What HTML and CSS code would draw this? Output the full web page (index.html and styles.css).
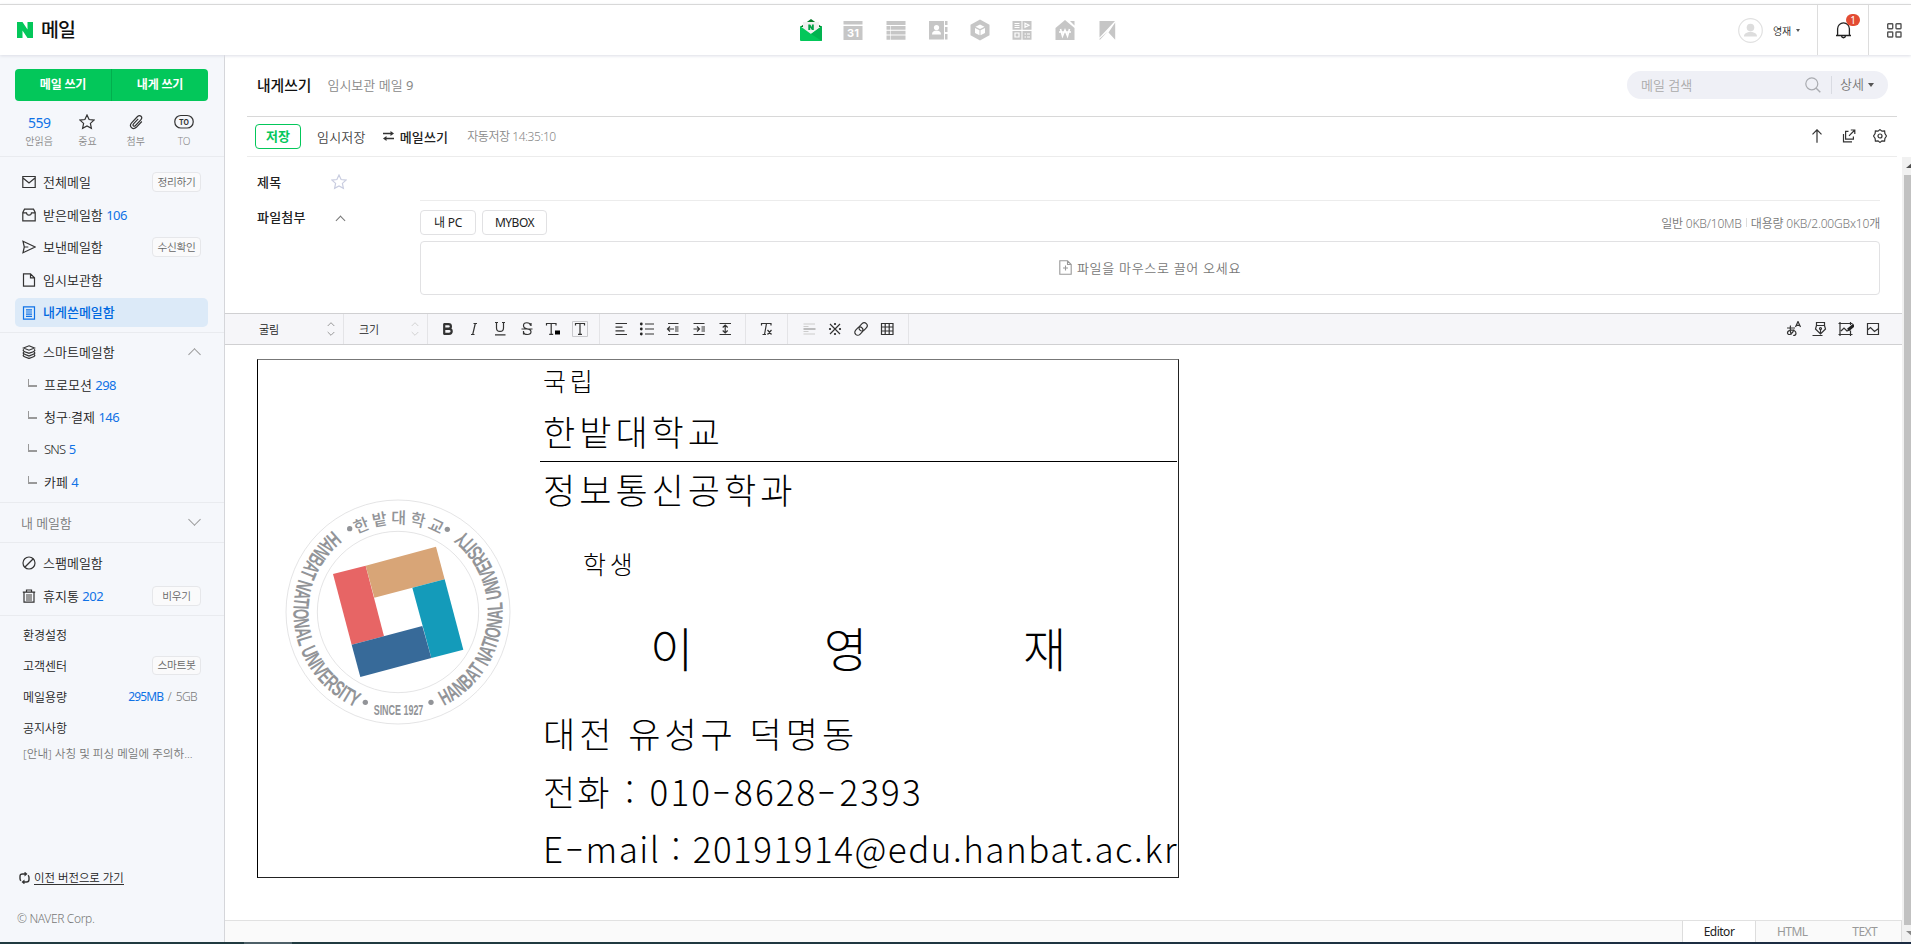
FILE: index.html
```html
<!DOCTYPE html>
<html lang="ko">
<head>
<meta charset="utf-8">
<title>내게쓰기 : 네이버 메일</title>
<link rel="stylesheet" href="styles.css">
</head>
<body>
<div class="app">
<header class="top">
  <div class="brand"><svg width="16" height="16" viewBox="0 0 16 16"><path fill="#03c75a" d="M0 0h5.500l5 7.400V0H16v16h-5.500l-5-7.400V16H0z"/></svg><span>메일</span></div>
  <nav class="apps">
    <svg viewBox="0 0 22 22"><path fill="#047a28" d="M0 8 11 0l11 8z"/><path fill="#f0f0f0" d="M3 3h16v9l-8 5-8-5z"/><path fill="#03c75a" d="M0 7l11 8 11-8v14a1 1 0 0 1-1 1H1a1 1 0 0 1-1-1z"/><path fill="#02b350" d="M22 7v15L11 15z"/><path fill="#02a247" d="M8.300 5.500h1.900l1.700 2.600V5.500h1.900V11h-1.900l-1.700-2.600V11H8.300z"/></svg>
    <svg viewBox="0 0 22 22"><path fill="#c6c6c6" d="M1.500 2h19v3.500h-19zM1.500 7h19v14h-19z"/><text x="11" y="18" text-anchor="middle" class="cal">31</text></svg>
    <svg viewBox="0 0 22 22"><path fill="#c6c6c6" d="M1.500 2h19v4h-19zM1.500 7h3.500v3.700h-3.500zM5.600 7h14.900v3.700H5.600zM1.500 11.700h3.500v3.700h-3.500zM5.600 11.700h14.900v3.700H5.600zM1.500 16.500h3.500v4.300h-3.500zM5.600 16.500h14.900v4.300H5.600z"/></svg>
    <svg viewBox="0 0 22 22"><path fill="#c6c6c6" d="M2 2h15v18.500H2zM18 2h2.500v4H18zM18 8h2.500v5H18zM18 15h2.500v5.500H18z"/><circle cx="9.500" cy="8.500" r="2.600" fill="#fff"/><path fill="#fff" d="M5 15.500c0-3 2-4 4.500-4s4.500 1 4.500 4z"/></svg>
    <svg viewBox="0 0 22 22"><path fill="#c6c6c6" d="M11 .5l9.500 5.300v10.400L11 21.500l-9.500-5.300V5.800z"/><path fill="#fff" d="M11 5.500l4.500 2.200L11 10 6.500 7.700zM6 9l4.500 2.300v5L6 14zM16 9l-4.500 2.300v5L16 14z"/></svg>
    <svg viewBox="0 0 22 22"><path fill="#c6c6c6" d="M1.500 2h9v8.700h-9zM11.500 2h9v8.700h-9zM1.500 12h9v8.700h-9zM11.500 12h9v8.700h-9z"/><path fill="none" stroke="#fff" stroke-width="1.200" d="M3.500 4.500h5M3.500 6.500h5M3.500 8.500h5M14 4.200l4 2-4 2zM4 14h4v4H4zM13.500 15h1.500M16 15h3M13.500 18h1.500M16 18h3"/></svg>
    <svg viewBox="0 0 22 22"><path fill="#c6c6c6" d="M11 1l9.500 8v12h-19V9zM16 2h4.500v4.500z"/><path fill="none" stroke="#fff" stroke-width="1.600" d="M6.500 10l2 7L11 11l2.500 6 2-7M5 13h12"/></svg>
    <svg viewBox="0 0 22 22"><path fill="#c6c6c6" d="M3.500 2h15.500L3.500 18.500zM19.200 3.500v17.300l-6.700-7.300zM11.800 12.500L4 20.800h-.5v-1z"/></svg>
  </nav>
  <div class="account">
    <div class="user"><svg width="25" height="25" viewBox="0 0 25 25"><circle cx="12.500" cy="12.500" r="11.800" fill="#fff" stroke="#e1e1e1" stroke-width="1.200"/><circle cx="12.500" cy="9.600" r="3.800" fill="#ddd"/><path fill="#ddd" d="M6 18.500c0-3 2-3.500 5-4.500h3c3 1 5 1.500 5 4.500z"/></svg><span>영재</span><i class="caret"></i></div>
    <div class="bell"><svg width="17" height="18" viewBox="0 0 17 18"><path fill="none" stroke="#222" stroke-width="1.300" d="M1 14.500h15M2.600 14.500V7.800a5.900 5.900 0 0 1 11.800 0v6.700M6.500 15c.3 2.300 3.700 2.300 4 0"/></svg><b>1</b></div>
    <div class="more"><svg width="15" height="15" viewBox="0 0 15 15"><g fill="none" stroke="#555" stroke-width="1.400"><rect x=".7" y=".7" width="5" height="5" rx=".6"/><rect x="9" y=".7" width="5" height="5" rx=".6"/><rect x=".7" y="9" width="5" height="5" rx=".6"/><rect x="9" y="9" width="5" height="5" rx=".6"/></g></svg></div>
  </div>
</header>
<div class="body">
<aside class="side">
  <div class="write"><span>메일 쓰기</span><span>내게 쓰기</span></div>
  <div class="quick">
    <div><em>559</em><span>안읽음</span></div>
    <div><svg width="16" height="16" viewBox="0 0 16 16"><path class="ln" d="M8 1l2.100 4.500 4.900.6-3.600 3.300 1 4.900L8 11.900l-4.400 2.400 1-4.900L1 6.100l4.900-.6z"/></svg><span>중요</span></div>
    <div><svg width="16" height="16" viewBox="0 0 16 16"><path class="ln" d="M13.800 7.500l-5.500 5.800c-3.500 3.200-7.800-1-4.700-4.500l5.900-6.300c2.600-2.400 5.700.7 3.300 3.300l-5.500 5.900c-1.500 1.300-3-.3-1.800-1.800l4.700-5"/></svg><span>첨부</span></div>
    <div><svg width="20" height="16" viewBox="0 0 20 16"><rect class="ln" x=".8" y="1.500" width="18.400" height="12.500" rx="6"/><text x="10" y="10.500" text-anchor="middle" class="to">TO</text></svg><span>TO</span></div>
  </div>
  <ul class="menu first">
    <li><svg viewBox="0 0 14 14"><path class="ln" d="M.8 1.500h12.400v11H.8zM1 3l6 5 6-5"/></svg><span>전체메일</span><b>정리하기</b></li>
    <li><svg viewBox="0 0 14 14"><path class="ln" d="M.8 4.500L2.500 1.200h9l1.700 3.300v8.300H.8zM.8 4.800h3.700c.3 3.200 4.700 3.200 5 0h3.700"/></svg><span>받은메일함 <em>106</em></span></li>
    <li><svg viewBox="0 0 14 14"><path class="ln" d="M1 1.200L13.200 7 1 12.800 2.300 7zM2.300 7h4"/></svg><span>보낸메일함</span><b>수신확인</b></li>
    <li><svg viewBox="0 0 14 14"><path class="ln" d="M1.500.8h7l4 4v8.400h-11zM8.500.8v4h4"/></svg><span>임시보관함</span></li>
    <li class="on"><svg viewBox="0 0 14 14"><path d="M1.500.8h11v12.400h-11zM4 3.800h6M4 6h6M4 8.200h6M4 10.400h6"/></svg><span>내게쓴메일함</span></li>
  </ul>
  <ul class="menu smart">
    <li><svg viewBox="0 0 14 14"><path class="ln" d="M7 .8l5.500 2.200L7 5.200 1.500 3zM2 4.500C-.5 5.700 3 6.800 7 8.300c4-1.500 7.500-2.600 5-3.800M2 7.200C-.5 8.400 3 9.500 7 11c4-1.500 7.500-2.600 5-3.800M2 9.600C-.5 10.800 3 12 7 13.400c4-1.400 7.500-2.600 5-3.800"/></svg><span>스마트메일함</span><i class="chev up"></i></li>
    <li class="sub"><u></u><span>프로모션 <em>298</em></span></li>
    <li class="sub"><u></u><span>청구·결제 <em>146</em></span></li>
    <li class="sub"><u></u><span><q>SNS</q> <em>5</em></span></li>
    <li class="sub"><u></u><span>카페 <em>4</em></span></li>
  </ul>
  <div class="mine"><span>내 메일함</span><i class="chev"></i></div>
  <ul class="menu trash">
    <li><svg viewBox="0 0 14 14"><circle class="ln" cx="7" cy="7" r="6"/><path class="ln" d="M3 11l8-8"/></svg><span>스팸메일함</span></li>
    <li><svg viewBox="0 0 14 14"><path fill="#999" d="M4 5h6v7H4z"/><path class="ln" d="M.8 3.200h12.400M4.500 3V1h5v2M2 3.200v10h10v-10"/></svg><span>휴지통 <em>202</em></span><b>비우기</b></li>
  </ul>
  <ul class="etc">
    <li>환경설정</li>
    <li>고객센터<b>스마트봇</b></li>
    <li>메일용량<span><em>295MB</em> / 5GB</span></li>
    <li>공지사항</li>
    <li class="note">[안내] 사칭 및 피싱 메일에 주의하...</li>
  </ul>
  <div class="old"><svg width="13" height="12" viewBox="0 0 13 12"><path fill="none" stroke="#333" stroke-width="1.400" d="M7.500 2H4.500Q2 2 2 4.500v2Q2 8 3 8.800M5.500 10h3Q11 10 11 7.500v-2Q11 4 10 3.200"/><path fill="#333" d="M6.500-.5L9.500 2l-3 2.500zM6.500 7.500L3.500 10l3 2.500z"/></svg><span>이전 버전으로 가기</span></div>
  <div class="copy">© NAVER Corp.</div>
</aside>
<main class="main">
  <div class="title"><h1>내게쓰기</h1><span>임시보관 메일 <em>9</em></span>
    <div class="search"><span>메일 검색</span><svg width="16" height="16" viewBox="0 0 16 16"><circle cx="6.800" cy="6.800" r="6" fill="none" stroke="#a9abb0" stroke-width="1.200"/><path stroke="#a9abb0" stroke-width="1.400" d="M11.200 11.200L15.300 15.300"/></svg><label>상세<i class="caret"></i></label></div>
  </div>
  <div class="actions"><button>저장</button><span class="temp">임시저장</span><svg width="11" height="10" viewBox="0 0 11 10"><path fill="none" stroke="#333" stroke-width="1.400" d="M0 2.500h9M2 7.500h9"/><path fill="#333" d="M7.500 0L11 2.500 7.500 5zM3.500 5L0 7.500 3.500 10z"/></svg><strong>메일쓰기</strong><span class="auto">자동저장 14:35:10</span>
    <div class="tools">
      <svg viewBox="0 0 14 14"><path class="ln" d="M7 13.800V.8M2.500 5.300L7 .8l4.500 4.500"/></svg>
      <svg viewBox="0 0 14 14"><path class="ln" d="M6.500 2.300H3.600v7.800h7.800V7.500M8.800 1h4v4M12.800 1L7 6.800M1.500 5v7.800H10"/></svg>
      <svg viewBox="0 0 14 14"><path class="ln" d="M7 .6l2 1.600 2.600-.2.300 2.500L13.500 7l-1.600 2.500-.3 2.500-2.600-.2-2 1.600-2-1.600-2.600.2-.3-2.500L.5 7l1.600-2.500.3-2.500 2.600.2z"/><circle class="ln" cx="7" cy="7" r="2"/></svg>
    </div>
  </div>
  <div class="pane">
    <div class="form">
      <div class="subject"><strong>제목</strong><svg width="16" height="16" viewBox="0 0 16 16"><path fill="none" stroke="#c9cde0" stroke-width="1.200" d="M8 1l2.100 4.500 4.900.6-3.600 3.300 1 4.900L8 11.900l-4.400 2.400 1-4.900L1 6.100l4.900-.6z"/></svg><div class="line"></div></div>
      <div class="attach"><strong>파일첨부</strong><i class="chev up dark"></i>
        <div class="files">
          <div class="frow"><span class="btn pc">내 PC</span><span class="btn box">MYBOX</span><span class="usage"><span>일반 0KB/10MB</span><s></s><span>대용량 0KB/2.00GBx10개</span></span></div>
          <div class="drop"><svg width="13" height="15" viewBox="0 0 13 15"><path fill="none" stroke="#999" stroke-width="1.100" d="M.8.8h7.700l3.700 3.700v9.700H.8zM8.500.8v3.700h3.700M6.500 5.500v5M4 8h5"/></svg><span>파일을 마우스로 끌어 오세요</span></div>
        </div>
      </div>
    </div>
    <div class="bar">
      <div class="sel font"><span>굴림</span><svg width="8" height="14" viewBox="0 0 8 14"><path fill="none" stroke="#999" d="M.7 4L4 .7 7.300 4M.7 10L4 13.300 7.300 10"/></svg></div>
      <div class="sel size"><span>크기</span><svg width="8" height="14" viewBox="0 0 8 14"><path fill="none" stroke="#d2d2d2" d="M.7 4L4 .7 7.300 4M.7 10L4 13.300 7.300 10"/></svg></div>
      <div class="grp g1">
        <svg viewBox="0 0 16 16"><path fill="none" stroke="#333" stroke-width="2.200" d="M4.200 3v10M3.500 3.200h5c3.200 0 3.200 4.500 0 4.500h-4M4 7.800h5c3.600 0 3.600 5 0 5H3.500"/></svg>
        <svg viewBox="0 0 16 16"><path class="ln" d="M7.500 2.500h3.500M5 13.500h3.500M9.300 2.500l-2.600 11"/></svg>
        <svg viewBox="0 0 16 16"><path class="ln" d="M3 1.500h3M10 1.500h3M4.500 1.500V7c0 4.600 7 4.600 7 0V1.500M3 13.800h10.500"/></svg>
        <svg viewBox="0 0 16 16"><path class="ln" d="M11.500 4.500c-.5-3.700-7-3.600-7 0 0 2 1.500 3 3.500 3.300s4 1 4 3c0 3.600-7 3.600-7.500 0M12 2v3M4.500 10v3.500M2.500 8h11"/></svg>
        <svg viewBox="0 0 16 16"><path class="ln" d="M1.500 4.500v-2h9.500v2M6.200 2.500v11M4.200 13.300h4"/><path fill="#000" d="M10 9.500h5v4h-5z"/></svg>
        <svg viewBox="0 0 16 16"><path fill="none" stroke="#c9c9cd" d="M.5.500h15v15H.5z"/><path class="ln" d="M3.500 4.500v-2h9v2M8 2.500v11M6 13.300h4"/></svg>
      </div>
      <div class="grp g2">
        <svg viewBox="0 0 16 16"><path class="ln" d="M2.500 2.500h11.500M2.500 6.200h7M2.500 9.800h9M2.500 13.500h11.500"/></svg>
        <svg viewBox="0 0 16 16"><path class="ln" d="M6 3h9M6 8h9M6 13h9"/><g fill="#222"><circle cx="2.300" cy="3" r="1.400"/><circle cx="2.300" cy="8" r="1.400"/><circle cx="2.300" cy="13" r="1.400"/></g></svg>
        <svg viewBox="0 0 16 16"><path class="ln" d="M3 2.500h10.500M3 13.500h10.500M2.500 8H9M5 5.500L2.500 8 5 10.500M10 6h3.500M10 8h3.500M10 10h3.500"/></svg>
        <svg viewBox="0 0 16 16"><path class="ln" d="M2.500 2.500H13.500M2.500 13.500H13.500M2.500 8H9M6 5.500L8.500 8 6 10.500M10.500 6H14M10.500 8H14M10.500 10H14"/></svg>
        <svg viewBox="0 0 16 16"><path class="ln" d="M2.500 2.500h11.500M2.500 13.500h11.500M8.200 4v8M5.700 6.500L8.200 4l2.500 2.500M5.700 9.500L8.200 12l2.500-2.500"/></svg>
      </div>
      <div class="grp g3"><svg viewBox="0 0 16 16"><path class="ln" d="M3.500 4.500V2.500h9.500v2M8.500 2.500l-2 11M4.500 13.500h3.500M9.500 9l4 4.500M13.500 9l-4 4.500"/></svg></div>
      <div class="grp g4">
        <svg viewBox="0 0 16 16"><path fill="none" stroke="#ccc" stroke-width="1.200" d="M2.500 3h11.500M2.500 13h11.500M2.500 5.500h5M2.500 10.500h5"/><path stroke="#aaa" stroke-width="1.500" d="M2.500 8h12"/></svg>
        <svg viewBox="0 0 16 16"><path class="ln" d="M3 3l10 10M13 3L3 13"/><g fill="#222"><circle cx="8" cy="3" r="1.100"/><circle cx="8" cy="13" r="1.100"/><circle cx="3" cy="8" r="1.100"/><circle cx="13" cy="8" r="1.100"/></g></svg>
        <svg viewBox="0 0 16 16"><g transform="rotate(-45 8 8)"><rect class="ln" x=".5" y="5" width="9" height="6" rx="3"/><rect class="ln" x="6.500" y="5" width="9" height="6" rx="3"/></g></svg>
        <svg viewBox="0 0 16 16"><path class="ln" d="M2.500 2.500h11.500v11H2.500zM2.500 6h11.500M2.500 10h11.500M6.200 2.500v11M10.200 2.500v11"/></svg>
      </div>
      <div class="right">
        <svg viewBox="0 0 16 16"><path class="ln" d="M1 7h8M4.500 4.500c-.5 4-.2 7 .8 9.300M8 8.500c-1.500 5-6 6.300-6.500 3.700-.2-3 8-5 8.500 0 0 1.600-1.500 2.300-2.800 2.300M9.500 6L12 .5 14.500 6M10.500 4.300h3"/></svg>
        <svg viewBox="0 0 16 16"><path class="ln" d="M4.500 1.500h8v3h-8zM4.500 4.500L3.500 8l5 5 5-5-1-3.500M8.500 13V8M.5 14.500h10"/><circle class="ln" cx="8.500" cy="7.500" r="1"/></svg>
        <svg viewBox="0 0 16 16"><path class="ln" d="M2 1v14M.5 2.500h14M12.500 9.500V15M.5 13.500h14M12.500 1v3M3 10l3-3 3 3 2-1"/><path stroke="#222" stroke-width="3" d="M10 9l6-5"/></svg>
        <svg viewBox="0 0 16 16"><path class="ln" d="M2.500 2.500h11v11H2.500zM2.500 9L5.500 6.500l4 4 4-3"/></svg>
      </div>
    </div>
    <div class="canvas">
      <div class="card">
        <div class="emblem">
          <svg width="226" height="226" viewBox="106 445 678 678">
            <defs>
              <path id="ccwL" d="M251.700 536.600A314 314 0 0 0 325 1074"/>
              <path id="ccwR" d="M582.600 1066A314 314 0 0 0 638.300 536.600"/>
              <path id="top" d="M257 598A264 264 0 0 1 633 598"/>
            </defs>
            <g fill="none" stroke="#d6d6d8" stroke-width="2"><circle cx="445" cy="784" r="336"/><circle cx="445" cy="784" r="242"/></g>
            <path fill="#e76565" d="M250 670L348 645 403 857 306 882z"/><path fill="#d8a577" d="M348 645L559 588 585 686 374 741z"/><path fill="#149bba" d="M488 711L585 686 641 897 545 922z"/><path fill="#376a99" d="M306 882L518 826 545 922 332 979z"/>
            <g fill="#929498"><circle cx="300" cy="534" r="8"/><circle cx="593" cy="536" r="8"/><circle cx="347" cy="1055" r="8"/><circle cx="544" cy="1055" r="8"/>
            <text class="ring"><textPath href="#ccwL" startOffset="4" textLength="642" lengthAdjust="spacingAndGlyphs">HANBAT NATIONAL UNIVERSITY</textPath></text>
            <text class="ring"><textPath href="#ccwR" textLength="632" lengthAdjust="spacingAndGlyphs">HANBAT NATIONAL UNIVERSITY</textPath></text>
            <text class="univ"><textPath href="#top" startOffset="51.5%" text-anchor="middle">한밭대학교</textPath></text>
            <text class="since" x="372" y="1092" textLength="149" lengthAdjust="spacingAndGlyphs">SINCE 1927</text></g>
          </svg>
        </div>
        <div class="info">
          <p class="s1">국립</p>
          <p class="s2">한밭대학교</p>
          <p class="s3">정보통신공학과</p>
          <p class="s4">학생</p>
          <p class="s5"><span>이</span><span>영</span><span>재</span></p>
          <p class="s6">대전 유성구 덕명동</p>
          <p class="s7">전화<i>:</i>010<i class="d">-</i>8628<i class="d">-</i>2393</p>
          <p class="s8">E<i class="d">-</i>mail<i>:</i>20191914@edu.hanbat.ac.kr</p>
        </div>
      </div>
    </div>
    <div class="tabs"><span class="cur">Editor</span><span>HTML</span><span>TEXT</span></div>
    <div class="scroll"><i class="au"></i><b></b><i class="ad"></i></div>
  </div>
</main>
</div>
<div class="taskbar"></div>
</div>
</body>
</html>
```

FILE: styles.css
```css
*{box-sizing:border-box}
body{margin:0;overflow:hidden;font-family:"Noto Sans","Noto Sans CJK KR",sans-serif;font-size:13px;font-weight:350;color:#222;background:#fff}
ul,p,h1{margin:0;padding:0;list-style:none;font-weight:400}
ul{font-weight:350}
em,i{font-style:normal}
em{font-weight:400}
q{quotes:none;letter-spacing:-.8px}
svg{display:block;flex:none}
.ln{fill:none;stroke:#333;stroke-width:1.2}
.app{width:1911px;height:944px;display:flex;flex-direction:column;padding-top:4px}
.top{height:51px;flex:none;border-top:1px solid #d8d8d8;display:flex;align-items:center;position:relative;z-index:2;background:#fff;box-shadow:0 1px 3px #dcdee6}
.brand{display:flex;align-items:center;gap:8px;padding-left:17px;width:800px;font-size:19.500px;font-weight:500;letter-spacing:-1px;color:#111}
.brand span{line-height:50px}
.apps{display:flex;gap:20.300px}
.apps svg{width:22px;height:22px}
.cal{font:bold 11px Inter,sans-serif;fill:#fff}
.account{margin-left:auto;display:flex;height:50px;align-items:center}
.user{display:flex;align-items:center;padding-right:17px;font-size:10px}
.user span{margin:0 5px 0 10px;letter-spacing:-.200px}
.caret{border:3px solid transparent;border-top:4px solid #555;border-bottom:0;display:inline-block}
.user .caret{border-width:3px 2px 0}
.bell,.more{height:50px;border-left:1px solid #ddd;display:flex;align-items:center}
.bell{width:51px;padding-left:17px;position:relative}
.bell b{position:absolute;left:28px;top:9px;width:14px;height:12px;border-radius:6px;background:#e34c33;color:#fff;font-size:10px;line-height:12px;text-align:center;font-weight:400}
.more{width:43px;padding-left:18px}
.body{display:flex;height:887px;flex:none}
.side{width:225px;background:#f5f7fb;border-right:1px solid #d5d6da;display:flex;flex-direction:column}
.side em{color:#0f72e6;letter-spacing:-.500px}
.write{margin:14px 16px 0 15px;height:32px;flex:none;background:#03c75a;border-radius:4px;display:flex;color:#fff;font-weight:700;font-size:12px;line-height:32px;text-align:center;letter-spacing:-.200px}
.write span{flex:1}
.write span+span{border-left:1px solid #02ae4e}
.quick{display:flex;padding:13px 0 0 15px;height:56px;flex:none;border-bottom:1px solid #e9ebef}
.quick div{width:48.300px;display:flex;flex-direction:column;align-items:center;font-size:10px;color:#888}
.quick em{font-size:14px;line-height:18px;height:16px}
.quick span{line-height:18px;margin-top:2px}
.to{font:bold 7px Inter,sans-serif;fill:#333}
.menu{padding:9px 16px 0 15px;flex:none}
.menu li{height:32.500px;display:flex;align-items:center;padding:0 7px;color:#222}
.menu li span{padding-bottom:1px}
.menu li svg{width:14px;height:14px;margin-right:7px}
.first{height:176px;border-bottom:1px solid #e9ebef}
.menu .on{height:29px;margin-top:2px;background:#dceaf8;border-radius:5px;color:#0068e0;font-weight:500}
.menu .on span{padding-bottom:2px}
.on path{fill:none;stroke:#0f72e6;stroke-width:1.200}
.side b{margin-left:auto;width:49px;height:20px;border:1px solid #e6e7ea;border-radius:4px;background:#fafafb;font-weight:350;font-size:10.700px;line-height:18px;text-align:center;color:#666;letter-spacing:-.300px}
.smart{padding-top:3px;height:170px;border-bottom:1px solid #e9ebef}
.menu .sub{padding-left:13px}
.sub u{width:9px;height:8px;border:solid #999;border-width:0 0 2px 1px;margin:-4px 7px 0 0}
.chev{width:9px;height:9px;border:solid #999;border-width:0 1px 1px 0;transform:rotate(45deg);margin:-5px 2px 0 auto}
.chev.up{transform:rotate(225deg);margin-top:5px}
.mine{height:40px;flex:none;padding:0 23px 1px 21px;border-bottom:1px solid #e9ebef;display:flex;align-items:center;color:#777;letter-spacing:-.100px}
.trash{padding-top:4px;height:73px;border-bottom:1px solid #e9ebef}
.etc{padding:3px 23px 0;flex:none;font-size:12px}
.etc li{height:31px;display:flex;align-items:center}
.etc li span{margin-left:auto;padding-right:4px;letter-spacing:-.600px;color:#777;word-spacing:2px}
.etc li em{letter-spacing:-.900px}
.etc b{line-height:17px;height:19px}
.etc .note{height:20px;font-size:11.600px;color:#777;white-space:nowrap}
.old{display:flex;align-items:center;gap:3px;margin-top:105px;padding-left:18px;height:20px;font-size:11.400px}
.old span{border-bottom:1px solid #333;line-height:13px}
.copy{padding-left:17px;margin-top:21px;line-height:20px;font-size:12px;letter-spacing:-.350px;color:#777}
.main{width:1686px;display:flex;flex-direction:column}
.title{margin:0 14px 0 22px;height:62px;flex:none;border-bottom:1px solid #d8d8d8;display:flex;align-items:center;padding:0 9px 2px 10px;color:#888}
.title h1{font-size:14.800px;font-weight:500;color:#111;margin-right:16px}
.search{margin-left:auto;width:261px;height:28px;border-radius:14px;background:#eff0f6;display:flex;align-items:center;padding-left:14px;color:#aaa}
.search svg{margin-left:auto}
.search label{border-left:1px solid #d9dbe2;height:18px;line-height:17px;margin-left:10px;padding-left:8px;width:57px;color:#777}
.search .caret{margin:0 0 2px 4px}
.actions{margin:0 14px 0 22px;height:40px;flex:none;border-bottom:1px solid #ececec;display:flex;align-items:center;padding:0 0 1px 8px}
.actions button{width:46px;height:25px;padding:0 0 1px;border:1px solid #03c75a;border-radius:4px;background:#fff;color:#03c75a;font:700 13px/20px "Noto Sans CJK KR",sans-serif}
.temp{margin:0 17px 0 16px;color:#444;letter-spacing:.200px}
.actions strong{font-weight:500;margin:0 19px 0 6px;letter-spacing:.200px}
.auto{font-size:12px;color:#888;letter-spacing:-.450px}
.tools{margin-left:auto;display:flex;gap:17.500px;padding-right:10px}
.tools svg{width:14px;height:14px}
.pane{height:785px;display:grid;grid-template:156px 31px 1fr 22px/1677px 9px}
.form{padding-left:32px}
.form strong{font-weight:500;letter-spacing:.200px}
.subject,.attach{display:flex}
.subject{height:44px;align-items:center;padding-top:4px}
.subject strong,.attach strong{width:74px}
.subject svg{margin-top:2px}
.line{margin-left:73px;width:1460px;border-bottom:1px solid #ececec;align-self:stretch}
.attach strong{line-height:32px}
.attach .chev,.chev.dark{width:7px;height:7px;border-color:#777;margin:16px 0 0 6px}
.files{margin-left:76px;width:1460px;padding-top:9px}
.frow{display:flex;gap:6px;height:25px;align-items:center}
.btn{height:25px;border:1px solid #e1e1e3;border-radius:4px;line-height:24px;text-align:center;font-size:12px;letter-spacing:-.500px;font-weight:400}
.btn.pc{letter-spacing:-.2px}
.pc{width:56px}.box{width:65px}
.usage{margin-left:auto;display:flex;align-items:center;color:#777;font-size:12px;letter-spacing:-.180px}
.usage s{width:1px;height:9px;background:#ddd;margin:0 4px}
.drop{margin-top:6px;height:54px;border:1px solid #e1e1e3;border-radius:4px;display:flex;align-items:center;justify-content:center;gap:5px;color:#777;font-size:13px;letter-spacing:.700px;padding-bottom:2px}
.bar{grid-column:1;background:#f6f6f9;border:solid #d0d0d2;border-width:1px 0;display:flex;padding-left:34px;margin-bottom:-1px;height:32px}
.sel,.grp{display:flex;align-items:center;border-right:1px solid #e4e4e7;flex:none;font-size:11px}
.sel svg{margin-left:auto}
.font{width:85px;padding-right:8px}
.size{width:84px;padding:0 8px 0 15px}
.grp svg,.right svg{width:16px;height:16px;margin:0 5.200px}
.g1{width:172px;padding-left:6.500px}
.g2{width:146px;padding-left:8px}.g2 svg{margin:0 5px}
.g3{width:42px;padding-left:7px}
.g4{width:121px;padding-left:8px}.g4 svg{margin:0 5px}
.right{margin-left:auto;display:flex;align-items:center;padding-right:16px}
.canvas{grid-column:1;padding:15px 0 0 32px}
.card{width:922px;height:519px;border:1px solid #222;border-color:#777 #222 #222 #000;display:grid;grid-template-columns:282px 638px}
.emblem{padding:139px 0 0 27px}
.ring{font:bold 66px "Liberation Sans Narrow","Liberation Sans",sans-serif}
.univ{font:500 49px "Noto Sans CJK KR",sans-serif;letter-spacing:9px}
.since{font:bold 45px "Liberation Sans Narrow","Liberation Sans",sans-serif}
.info{color:#000;font-family:"Noto Sans CJK KR",sans-serif;white-space:nowrap}
.info p{font-weight:300;font-size:35px;letter-spacing:4px;padding-left:3px}
.info .s1{font-size:25px;height:42px;line-height:40px;letter-spacing:3.800px}
.info .s2{height:60px;line-height:58px;border-bottom:1px solid #000;margin-right:1px}
.info .s3{height:56px;line-height:54px}
.info .s4{font-size:25px;height:92px;line-height:91px;padding-left:43px;letter-spacing:3.800px}
.info .s5{height:95px;line-height:74px;font-size:47px;display:flex;padding-left:110px;letter-spacing:0}
.s5 span{width:174px;flex:none}
.s5 span+span{width:199px}
.s5 span:last-child{width:50px}
.info .s6{height:58px;line-height:55px;word-spacing:-1px}
.info .s7,.info .s8{height:57px;line-height:55px;letter-spacing:1.500px}
.info .s7{letter-spacing:2.100px}
.s7 i,.s8 i{display:inline-block;width:38px;text-align:center}
.s8 i{width:32px}
.s7 .d,.s8 .d{width:22px;transform:scaleX(1.6)}
.s8 .d{width:21px}
.tabs{grid-column:1;background:#fafafa;border-top:1px solid #e1e1e1;border-right:1px solid #ddd;display:flex;justify-content:flex-end;color:#999;font-size:12px;font-weight:400;letter-spacing:-.500px;line-height:21px;text-align:center}
.tabs span{width:72.500px}
.tabs .cur{width:74px;background:#fff;border:solid #ddd;border-width:0 1px;color:#222}
.scroll{grid-column:2;grid-row:1/5;background:#f1f1f1;display:flex;flex-direction:column;overflow:hidden}
.scroll b{width:7px;margin-left:2px;height:750px;background:#c1c1c1}
.scroll i{margin-left:4px;border:6px solid transparent;width:0}
.au{border-width:0 6px 5px!important;border-bottom-color:#505050!important;margin-top:6px;margin-bottom:7px}
.ad{border-width:5px 6px 0!important;border-top-color:#888!important;margin-top:6px}
.taskbar{height:3px;flex:none;margin-top:0;background:linear-gradient(90deg,#203a40 0 244px,#4d6068 244px 292px,#203a40 292px 30%,#1b2b42)}
```
